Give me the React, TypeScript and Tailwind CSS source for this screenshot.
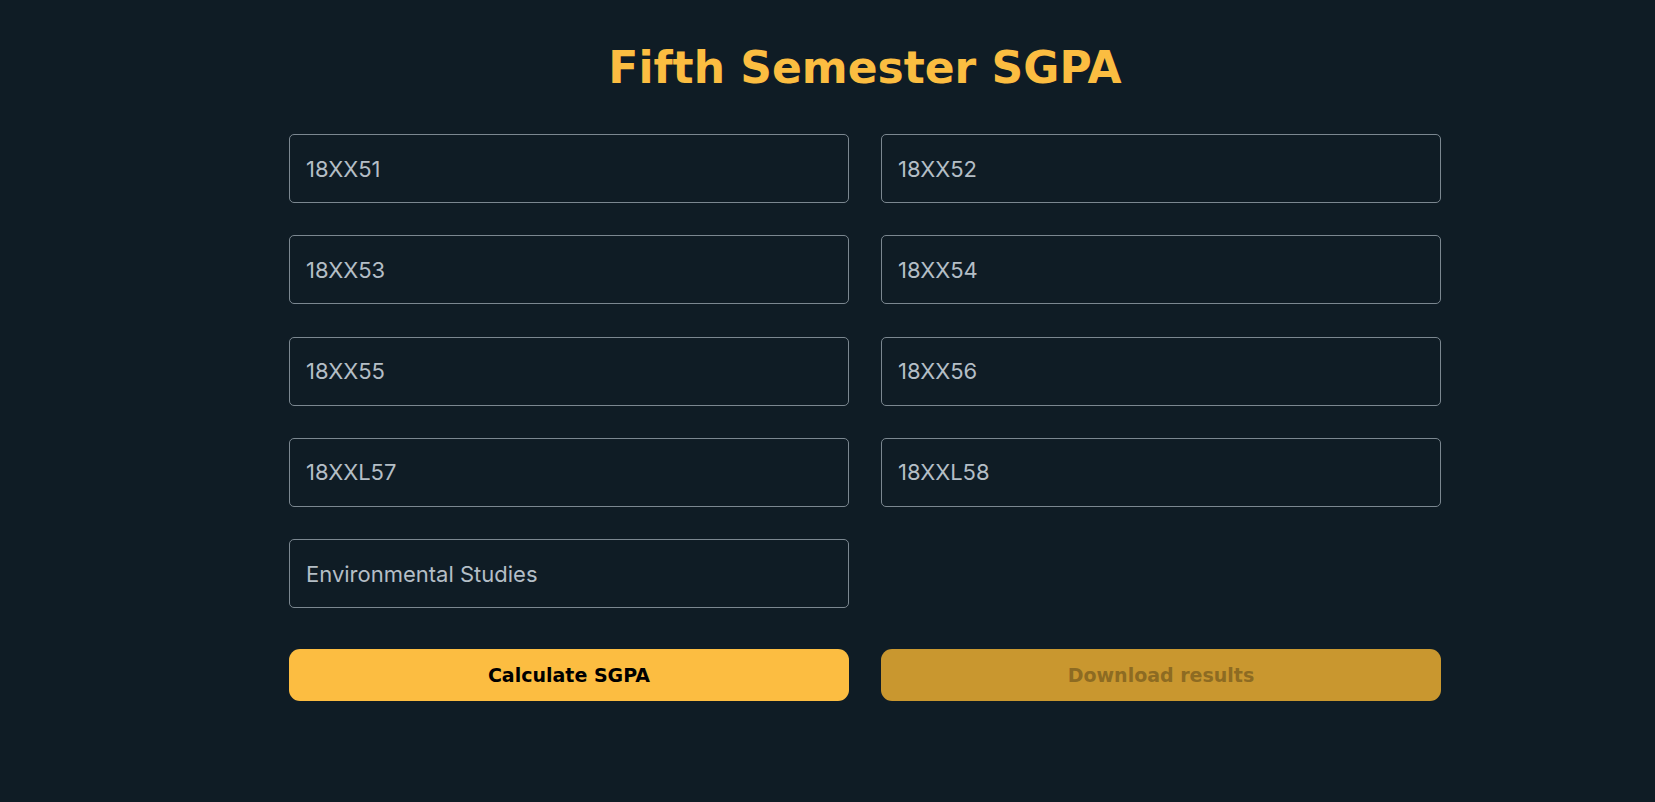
import React from "react";

const subjects = [
  "18XX51",
  "18XX52",
  "18XX53",
  "18XX54",
  "18XX55",
  "18XX56",
  "18XXL57",
  "18XXL58",
  "Environmental Studies",
];

const heading = { fontFamily: "'DejaVu Sans', Inter, sans-serif" };

export default function App() {
  return (
    <div
      className="min-h-[802px] w-full bg-[#0f1c25] pl-[75px] flex justify-center"
      style={{ fontFamily: "Inter, 'Noto Sans', sans-serif" }}
    >
      <div className="w-[1152px] flex flex-col">
        <h1
          className="mt-[44px] text-center text-[44px] leading-[48px] font-bold text-[#fbbd41]"
          style={heading}
        >
          Fifth Semester SGPA
        </h1>
        <div className="mt-[42px] grid grid-cols-2 gap-x-[32px] gap-y-[32.25px]">
          {subjects.map((s) => (
            <input
              key={s}
              placeholder={s}
              className="h-[69px] rounded-[5px] border border-[#7b8790] bg-transparent px-[16px] text-[22px] text-[#b4bec6] placeholder:text-[#b4bec6] outline-none"
            />
          ))}
        </div>
        <div className="mt-[41px] grid grid-cols-2 gap-x-[32px]">
          <button
            className="h-[52px] rounded-[11px] bg-[#fcbd41] text-[19px] font-bold text-black"
            style={heading}
          >
            Calculate SGPA
          </button>
          <button
            disabled
            className="h-[52px] rounded-[11px] bg-[#c9972f] text-[19px] font-bold text-[#8d6b22]"
            style={heading}
          >
            Download results
          </button>
        </div>
      </div>
    </div>
  );
}
